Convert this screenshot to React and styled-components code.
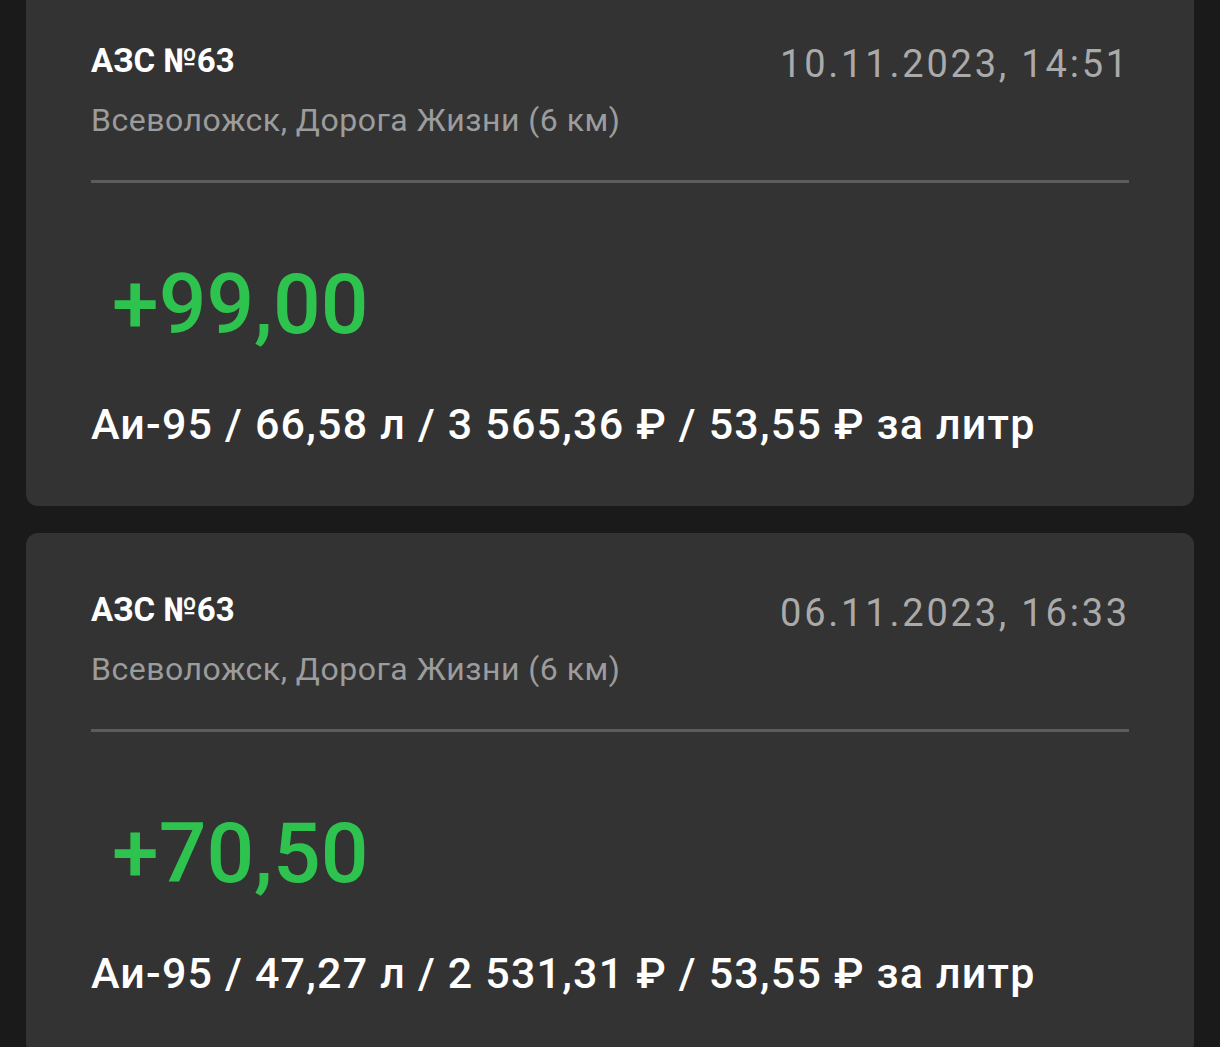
import React from "react";
import styled, { createGlobalStyle } from "styled-components";

const Global = createGlobalStyle`
  html, body {
    margin: 0;
    padding: 0;
    background: #1a1a1a;
    font-family: Roboto, "Noto Sans", "Liberation Sans", sans-serif;
    overflow: hidden;
  }
`;

const List = styled.div`
  display: flex;
  flex-direction: column;
  gap: 27px;
  padding: 0 26px;
  margin-top: -16px;
`;

const Card = styled.div`
  background: #333333;
  border-radius: 12px;
  padding: 57px 65px 57px 65px;
  display: flex;
  flex-direction: column;
`;

const Head = styled.div`
  display: flex;
  justify-content: space-between;
  align-items: flex-start;
`;

const Station = styled.div`
  display: flex;
  flex-direction: column;
  gap: 19px;
`;

const Title = styled.div`
  color: #ffffff;
  font-size: 33px;
  font-weight: 700;
  line-height: 40px;
`;

const Address = styled.div`
  color: #9c9c9c;
  font-size: 32px;
  font-weight: 400;
  line-height: 40px;
  letter-spacing: 0.5px;
`;

const DateText = styled.div`
  color: #aaaaaa;
  font-size: 38px;
  font-weight: 400;
  line-height: 40px;
  letter-spacing: 2.8px;
  margin-top: 3px;
  margin-right: -1px;
`;

const Divider = styled.div`
  height: 3px;
  background: #5c5c5c;
  margin-top: 40px;
`;

const Amount = styled.div`
  color: #2ec34e;
  font-size: 84px;
  font-weight: 500;
  line-height: 90px;
  padding-left: 21px;
  margin-top: 77px;
`;

const Fuel = styled.div`
  color: #ffffff;
  font-size: 43px;
  font-weight: 500;
  line-height: 50px;
  letter-spacing: 1.2px;
  margin-top: 49px;
`;

const items = [
  {
    date: "10.11.2023, 14:51",
    amount: "+99,00",
    fuel: "Аи-95 / 66,58 л / 3 565,36 ₽ / 53,55 ₽ за литр",
  },
  {
    date: "06.11.2023, 16:33",
    amount: "+70,50",
    fuel: "Аи-95 / 47,27 л / 2 531,31 ₽ / 53,55 ₽ за литр",
  },
];

export default function App() {
  return (
    <>
      <Global />
      <List>
        {items.map((it) => (
          <Card key={it.date}>
            <Head>
              <Station>
                <Title>АЗС №63</Title>
                <Address>Всеволожск, Дорога Жизни (6 км)</Address>
              </Station>
              <DateText>{it.date}</DateText>
            </Head>
            <Divider />
            <Amount>{it.amount}</Amount>
            <Fuel>{it.fuel}</Fuel>
          </Card>
        ))}
      </List>
    </>
  );
}
